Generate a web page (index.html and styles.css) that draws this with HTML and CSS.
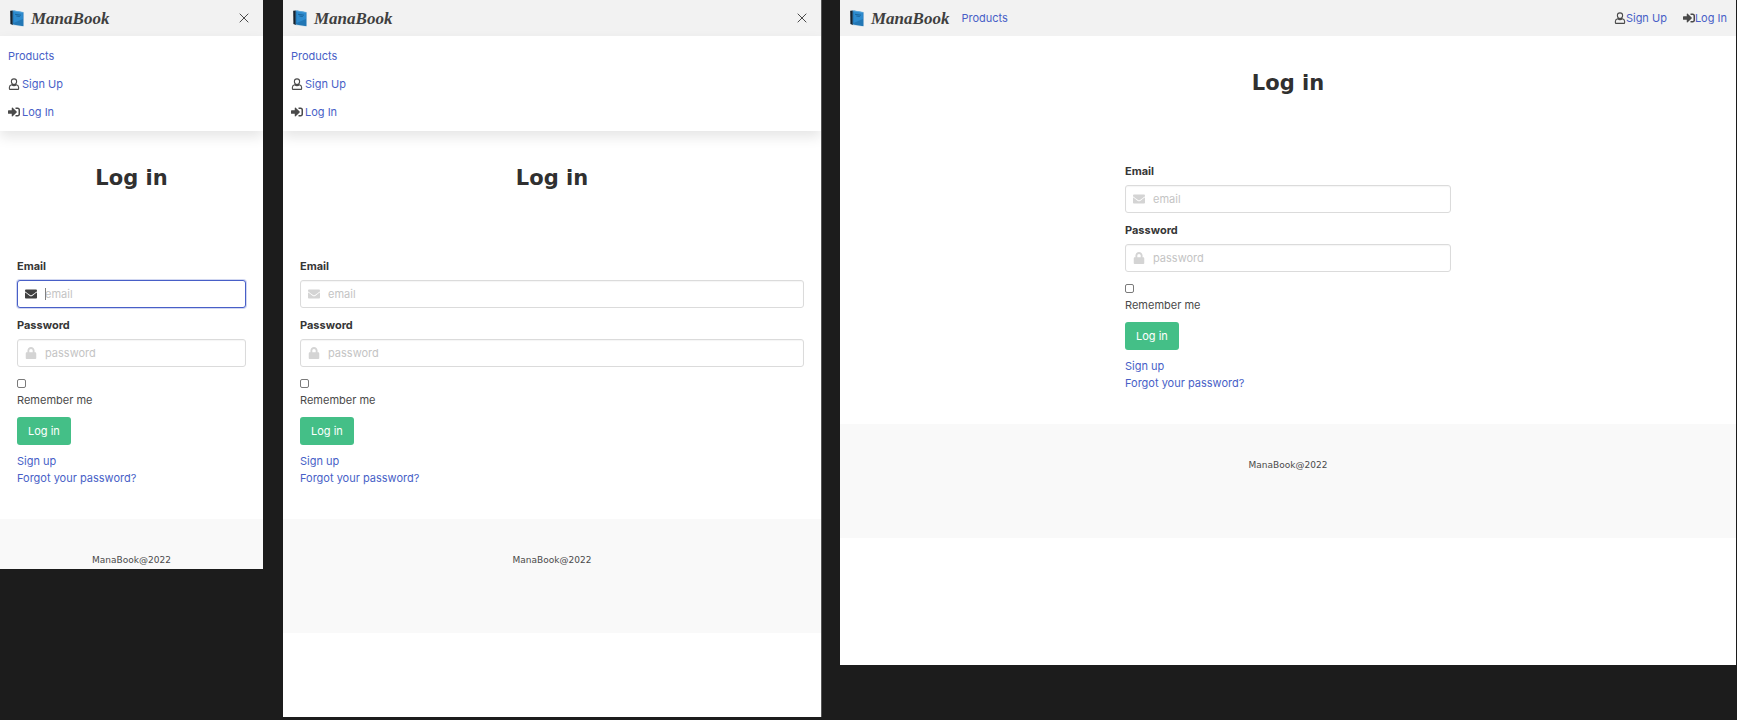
FILE: index.html
```
<!DOCTYPE html>
<html lang="en">
<head>
<meta charset="utf-8">
<title>ManaBook - Log in</title>
<link rel="stylesheet" href="styles.css">
</head>
<body>
<svg class="sprite" aria-hidden="true">
  <symbol id="book" viewBox="0 0 14 17">
    <path fill="#cfe0ea" d="M2 14.6 3.2 15.4 12.2 16.6 13.2 15.6V3L12 14z"/>
    <path fill="#16222e" d="M.2.8 2.9.4V15L.4 14z"/>
    <path fill="#2277b5" d="M2.7.4 13.5 2.2V16.2L2.7 14.4z"/>
    <path fill="#2d8bce" d="M3.6.6 12.9 2.2V9L3.6 13z"/>
    <path stroke="#175a8e" stroke-width=".8" fill="none" d="M5 4.3 11 5.2M6.3 6 9.8 6.5"/>
    <path stroke="#7cbce6" stroke-width=".6" fill="none" d="M2.8.7 13.3 2.4"/>
  </symbol>
  <symbol id="user" viewBox="0 0 448 512">
    <path fill="none" stroke="currentColor" stroke-width="46" d="M224 38c64 0 112 52 112 116s-48 120-112 120-112-56-112-120S160 38 224 38zM122 288c-56 14-92 52-95 112v58c0 16 10 28 27 28h340c17 0 27-12 27-28v-58c-3-60-39-98-95-112-60 44-144 44-204 0z"/>
  </symbol>
  <symbol id="login" viewBox="0 0 512 512">
    <path fill="currentColor" d="M416 448h-84c-6.600 0-12-5.400-12-12v-40c0-6.600 5.400-12 12-12h84c17.700 0 32-14.300 32-32V160c0-17.700-14.300-32-32-32h-84c-6.600 0-12-5.400-12-12V76c0-6.600 5.400-12 12-12h84c53 0 96 43 96 96v192c0 53-43 96-96 96zm-47-209L201 71c-15-15-41-4.500-41 17v96H24c-13.300 0-24 10.700-24 24v96c0 13.300 10.700 24 24 24h136v96c0 21.500 26 32 41 17l168-168c9.300-9.400 9.300-24.600 0-34z"/>
  </symbol>
  <symbol id="mail" viewBox="0 0 512 384">
    <path fill="currentColor" d="M502 127c4-3 10 0 10 5v204c0 26-22 48-48 48H48c-26 0-48-22-48-48V132c0-5 6-8 10-5 22 17 52 40 154 114 21 15 57 48 92 47 35 1 72-32 92-47 102-74 132-97 154-114zM256 256c23 0 57-29 73-41C462 118 472 110 503 86c6-5 9-12 9-19V48c0-26-22-48-48-48H48C22 0 0 22 0 48v19c0 7 3 14 9 19 31 24 41 32 174 129 16 12 50 41 73 41z"/>
  </symbol>
  <symbol id="lock" viewBox="0 0 448 512">
    <path fill="currentColor" d="M400 224h-24v-72C376 68 308 0 224 0S72 68 72 152v72H48c-26 0-48 22-48 48v192c0 26 22 48 48 48h352c26 0 48-22 48-48V272c0-26-22-48-48-48zm-104 0H152v-72c0-40 32-72 72-72s72 32 72 72z"/>
  </symbol>
  <symbol id="close" viewBox="0 0 10 10">
    <path fill="none" stroke="currentColor" d="M.7.7l8.600 8.600M9.300.7L.7 9.300"/>
  </symbol>
</svg>

<main class="board">
  <section class="screen screen-mobile">
    <header class="navbar">
      <a class="brand" href="#"><svg class="brand-icon"><use href="#book"/></svg>ManaBook</a>
      <button class="close" type="button" aria-label="Close menu"><svg><use href="#close"/></svg></button>
    </header>
    <nav class="menu">
      <div class="menu-item"><a href="#">Products</a></div>
      <div class="menu-item"><svg class="icon"><use href="#user"/></svg><a href="#">Sign Up</a></div>
      <div class="menu-item"><svg class="icon"><use href="#login"/></svg><a href="#">Log In</a></div>
    </nav>
    <div class="section">
      <h1 class="title">Log in</h1>
      <form class="form">
        <label class="label" for="email-1">Email</label>
        <div class="control is-focused">
          <svg class="field-icon"><use href="#mail"/></svg>
          <span class="caret"></span>
          <input class="input" id="email-1" type="email" placeholder="email">
        </div>
        <label class="label" for="password-1">Password</label>
        <div class="control">
          <svg class="field-icon"><use href="#lock"/></svg>
          <input class="input" id="password-1" type="password" placeholder="password">
        </div>
        <div class="remember">
          <input class="checkbox" id="remember-1" type="checkbox">
          <label for="remember-1">Remember me</label>
        </div>
        <button class="button" type="button">Log in</button>
        <div class="links"><a href="#">Sign up</a><a href="#">Forgot your password?</a></div>
      </form>
    </div>
    <footer class="footer">ManaBook@2022</footer>
  </section>

  <section class="screen screen-tablet">
    <header class="navbar">
      <a class="brand" href="#"><svg class="brand-icon"><use href="#book"/></svg>ManaBook</a>
      <button class="close" type="button" aria-label="Close menu"><svg><use href="#close"/></svg></button>
    </header>
    <nav class="menu">
      <div class="menu-item"><a href="#">Products</a></div>
      <div class="menu-item"><svg class="icon"><use href="#user"/></svg><a href="#">Sign Up</a></div>
      <div class="menu-item"><svg class="icon"><use href="#login"/></svg><a href="#">Log In</a></div>
    </nav>
    <div class="section">
      <h1 class="title">Log in</h1>
      <form class="form">
        <label class="label" for="email-2">Email</label>
        <div class="control">
          <svg class="field-icon"><use href="#mail"/></svg>
          <input class="input" id="email-2" type="email" placeholder="email">
        </div>
        <label class="label" for="password-2">Password</label>
        <div class="control">
          <svg class="field-icon"><use href="#lock"/></svg>
          <input class="input" id="password-2" type="password" placeholder="password">
        </div>
        <div class="remember">
          <input class="checkbox" id="remember-2" type="checkbox">
          <label for="remember-2">Remember me</label>
        </div>
        <button class="button" type="button">Log in</button>
        <div class="links"><a href="#">Sign up</a><a href="#">Forgot your password?</a></div>
      </form>
    </div>
    <footer class="footer">ManaBook@2022</footer>
  </section>

  <section class="screen screen-desktop">
    <header class="navbar">
      <a class="brand" href="#"><svg class="brand-icon"><use href="#book"/></svg>ManaBook</a>
      <nav class="nav">
        <a href="#">Products</a>
        <div class="nav-end">
          <span class="nav-item"><svg class="icon"><use href="#user"/></svg><a href="#">Sign Up</a></span>
          <span class="nav-item"><svg class="icon"><use href="#login"/></svg><a href="#">Log In</a></span>
        </div>
      </nav>
    </header>
    <div class="section">
      <h1 class="title">Log in</h1>
      <form class="form">
        <label class="label" for="email-3">Email</label>
        <div class="control">
          <svg class="field-icon"><use href="#mail"/></svg>
          <input class="input" id="email-3" type="email" placeholder="email">
        </div>
        <label class="label" for="password-3">Password</label>
        <div class="control">
          <svg class="field-icon"><use href="#lock"/></svg>
          <input class="input" id="password-3" type="password" placeholder="password">
        </div>
        <div class="remember">
          <input class="checkbox" id="remember-3" type="checkbox">
          <label for="remember-3">Remember me</label>
        </div>
        <button class="button" type="button">Log in</button>
        <div class="links"><a href="#">Sign up</a><a href="#">Forgot your password?</a></div>
      </form>
    </div>
    <footer class="footer">ManaBook@2022</footer>
  </section>
</main>
</body>
</html>
```

FILE: styles.css
```
* { box-sizing: border-box; }

body {
  margin: 0;
  background: #1c1c1c;
  color: #4a4a4a;
  font-family: Inter, "Liberation Sans", sans-serif;
  font-size: 11px;
  line-height: 17px;
}

a { color: #485fc7; text-decoration: none; }

.sprite { display: none; }

.board {
  display: grid;
  grid-template-columns: 263fr 20px 539fr 18px 896fr;
  align-items: start;
  padding-right: 1px;
}

.screen { background: #fff; overflow: hidden; }
.screen-mobile { grid-column: 1; }
.screen-tablet { grid-column: 3; padding-bottom: 84px; border-right: 1px solid #555; }
.screen-desktop { grid-column: 5; padding-bottom: 127px; }

.navbar {
  display: flex;
  align-items: center;
  height: 36px;
  padding: 0 9px 0 10px;
  background: #f2f2f2;
}

.brand {
  display: flex;
  align-items: center;
  gap: 7px;
  color: #3f3f3f;
  font-family: "Liberation Serif", serif;
  font-size: 17px;
  font-style: italic;
  font-weight: 700;
}

.brand-icon { width: 14px; height: 17px; }

.close {
  display: flex;
  margin-left: auto;
  padding: 5px;
  border: 0;
  background: none;
  color: #4a4a4a;
}

.close svg { width: 10px; height: 10px; }

.icon { width: 12px; height: 12px; color: #4a4a4a; }

.menu {
  position: relative;
  padding: 6px 8px 5px;
  box-shadow: 0 6px 12px rgba(10, 10, 10, .1);
}

.menu-item {
  display: flex;
  align-items: center;
  gap: 2px;
  height: 28px;
}

.nav {
  display: flex;
  flex: 1;
  align-items: center;
  justify-content: space-between;
  padding-left: 12px;
}

.nav-end { display: flex; gap: 16px; }
.nav-item { display: flex; align-items: center; }

.section { padding: 34px 17px 32px; }

.title {
  margin: 0 0 67px;
  color: #303030;
  font-family: "DejaVu Sans", sans-serif;
  font-size: 21px;
  font-weight: 700;
  line-height: 26px;
  text-align: center;
}

.screen-desktop .form { max-width: 326px; margin: 0 auto; }

.label {
  display: block;
  margin-bottom: 6px;
  color: #363636;
  font-weight: 700;
  line-height: 16px;
}

.control { position: relative; margin-bottom: 9px; }

.input {
  display: block;
  width: 100%;
  height: 28px;
  padding: 0 8px 0 27px;
  border: 1px solid #dbdbdb;
  border-radius: 3px;
  background: #fff;
  box-shadow: inset 0 1px 1px rgba(10, 10, 10, .04);
  color: #363636;
  font: inherit;
}

.input::placeholder { color: #c4c4c4; opacity: 1; }

.field-icon {
  position: absolute;
  top: 8px;
  left: 8px;
  width: 12px;
  height: 12px;
  color: #d4d4d4;
}

.is-focused .input {
  border-color: #485fc7;
  box-shadow: 0 0 0 1px rgba(72, 95, 199, .25);
}

.is-focused .field-icon { color: #404040; }

.caret {
  position: absolute;
  top: 8px;
  left: 28px;
  width: 1px;
  height: 12px;
  background: #808080;
}

.remember { display: flex; flex-direction: column; align-items: flex-start; }

.checkbox {
  appearance: none;
  width: 9px;
  height: 9px;
  margin: 3px 0 4px;
  border: 1px solid #7a7a7a;
  border-radius: 2px;
  background: #fff;
}

.button {
  height: 28px;
  margin: 8px 0;
  padding: 0 11px;
  border: 0;
  border-radius: 3px;
  background: #44bf87;
  color: #fff;
  font: inherit;
}

.links { display: flex; flex-direction: column; align-items: flex-start; }

.footer {
  padding: 34px 17px 66px;
  background: #f9f9f9;
  font-family: "DejaVu Sans", sans-serif;
  font-size: 9px;
  line-height: 14px;
  text-align: center;
}

.screen-mobile .footer { padding-bottom: 2px; }
```
